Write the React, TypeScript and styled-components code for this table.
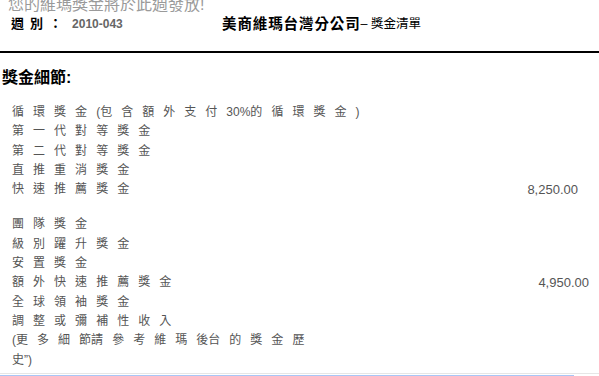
import styled, { createGlobalStyle } from "styled-components";

const GlobalStyle = createGlobalStyle`
  html, body {
    margin: 0;
    padding: 0;
    background: #fff;
  }
  body {
    font-family: "Liberation Sans", "Noto Sans CJK TC", Arial, sans-serif;
    overflow: hidden;
  }
`;

type Bonus = { label: string; amount?: string; offset?: number };

const groupOne: Bonus[] = [
  { label: "循 環 獎 金 (包 含 額 外 支 付 30%的 循 環 獎 金 )" },
  { label: "第 一 代 對 等 獎 金" },
  { label: "第 二 代 對 等 獎 金" },
  { label: "直 推 重 消 獎 金" },
  { label: "快 速 推 薦 獎 金", amount: "8,250.00", offset: 21 },
];

const groupTwo: Bonus[] = [
  { label: "團 隊 獎 金" },
  { label: "級 別 躍 升 獎 金" },
  { label: "安 置 獎 金" },
  { label: "額 外 快 速 推 薦 獎 金", amount: "4,950.00", offset: 10 },
  { label: "全 球 領 袖 獎 金" },
  { label: "調 整 或 彌 補 性 收 入" },
];

const App = () => {
  return (
    <Page>
      <GlobalStyle />
      <Notice>您的維瑪獎金將於此週發放!</Notice>
      <HeaderRow>
        <WeekCell>
          <WeekLabel>週 別 ：</WeekLabel>
          <WeekNo>2010-043</WeekNo>
        </WeekCell>
        <TitleCell>
          <Company>美商維瑪台灣分公司</Company>
          <SubTitle>– 獎金清單</SubTitle>
        </TitleCell>
      </HeaderRow>
      <Rule />
      <SectionTitle>獎金細節:</SectionTitle>
      <List>
        {groupOne.map((b) => (
          <Row key={b.label}>
            <Item>{b.label}</Item>
            {b.amount && <Amount $offset={b.offset}>{b.amount}</Amount>}
          </Row>
        ))}
        <Spacer />
        {groupTwo.map((b) => (
          <Row key={b.label}>
            <Item>{b.label}</Item>
            {b.amount && <Amount $offset={b.offset}>{b.amount}</Amount>}
          </Row>
        ))}
        <Row>
          <Item>
            (更 多 細 節請 參 考 維 瑪 後台 的 獎 金 歷
            <br />
            史”)
          </Item>
        </Row>
      </List>
      <Footer>
        <FooterBar />
      </Footer>
    </Page>
  );
};

const Page = styled.div`
  width: 599px;
  height: 376px;
  overflow: hidden;
`;

const Notice = styled.div`
  margin-top: -3px;
  padding-left: 8px;
  font-size: 16px;
  line-height: 16px;
  color: #9a9a9a;
`;

const HeaderRow = styled.div`
  display: flex;
  align-items: center;
  margin-top: 3px;
  height: 16px;
  line-height: 16px;
`;

const WeekCell = styled.div`
  flex: 0 0 222px;
  box-sizing: border-box;
  padding-left: 11px;
  display: flex;
  align-items: center;
`;

const WeekLabel = styled.span`
  font-size: 13px;
  font-weight: bold;
  color: #000;
  word-spacing: 2.4px;
`;

const WeekNo = styled.span`
  margin-left: 10px;
  font-size: 12px;
  font-weight: bold;
  color: #666;
`;

const TitleCell = styled.div`
  display: flex;
  align-items: center;
`;

const Company = styled.span`
  font-size: 14.5px;
  font-weight: bold;
  letter-spacing: 0.9px;
  color: #000;
`;

const SubTitle = styled.span`
  font-size: 12.5px;
  color: #000;
`;

const Rule = styled.div`
  margin-top: 19px;
  height: 2px;
  background: #000;
`;

const SectionTitle = styled.h2`
  margin: 15px 0 0;
  padding-left: 2px;
  font-size: 16px;
  line-height: 20px;
  font-weight: bold;
  color: #000;
`;

const List = styled.div`
  margin-top: 15px;
  display: flex;
  flex-direction: column;
`;

const Row = styled.div`
  display: flex;
  justify-content: space-between;
  align-items: flex-start;
  padding-left: 12px;
  font-size: 12px;
  line-height: 19.3px;
`;

const Item = styled.span`
  color: #555;
  word-spacing: 5.7px;
  white-space: nowrap;
`;

const Amount = styled.span<{ $offset?: number }>`
  padding-right: ${(p) => p.$offset ?? 20}px;
  font-size: 13px;
  color: #555;
`;

const Spacer = styled.div`
  height: 16px;
`;

const Footer = styled.div`
  margin-top: 3px;
  border-top: 1px solid #e6e6e6;
  padding-top: 1px;
`;

const FooterBar = styled.div`
  width: 574px;
  height: 2px;
  background: #a9c6f6;
`;

export default App;
